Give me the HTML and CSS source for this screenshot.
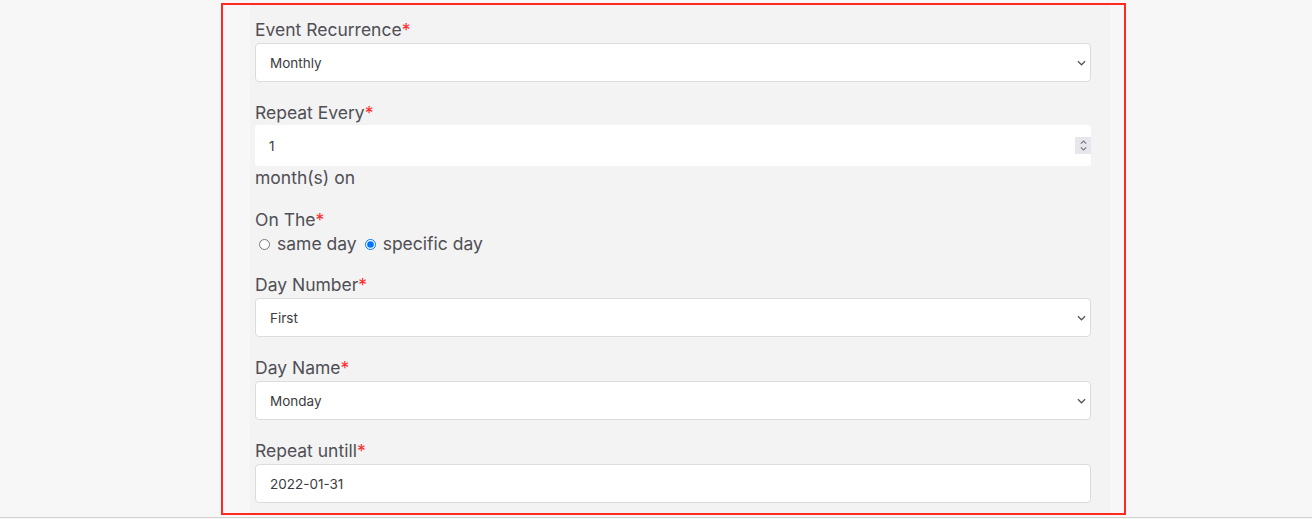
FILE: index.html
```html
<!DOCTYPE html>
<html lang="en">
<head>
<meta charset="utf-8">
<title>Event Recurrence</title>
<link rel="stylesheet" href="styles.css">
</head>
<body>
<div class="page">
  <div class="frame">
    <form class="panel">
      <div class="group">
        <label class="label">Event Recurrence<span class="req">*</span></label>
        <div class="select-wrap">
          <select class="control select"><option>Monthly</option></select>
          <svg class="chev" viewBox="0 0 10 6" width="9" height="6"><path d="M1 1l4 4 4-4" fill="none" stroke="#555" stroke-width="1.4"/></svg>
        </div>
      </div>
      <div class="group group-text">
        <label class="label label-tight">Repeat Every<span class="req">*</span></label>
        <div class="number">
          <input class="num-input" type="text" value="1">
          <span class="spin"><svg viewBox="0 0 10 16" width="9" height="15"><path d="M2 6l3-3 3 3M2 10l3 3 3-3" fill="none" stroke="#7a7a86" stroke-width="1.3"/></svg></span>
        </div>
        <div class="text-line">month(s) on</div>
      </div>
      <div class="group group-radio">
        <label class="label label-tight">On The<span class="req">*</span></label>
        <div class="radios">
          <label class="radio"><input type="radio" name="on"> same day</label>
          <label class="radio"><input type="radio" name="on" checked> specific day</label>
        </div>
      </div>
      <div class="group">
        <label class="label">Day Number<span class="req">*</span></label>
        <div class="select-wrap">
          <select class="control select"><option>First</option></select>
          <svg class="chev" viewBox="0 0 10 6" width="9" height="6"><path d="M1 1l4 4 4-4" fill="none" stroke="#555" stroke-width="1.4"/></svg>
        </div>
      </div>
      <div class="group">
        <label class="label">Day Name<span class="req">*</span></label>
        <div class="select-wrap">
          <select class="control select"><option>Monday</option></select>
          <svg class="chev" viewBox="0 0 10 6" width="9" height="6"><path d="M1 1l4 4 4-4" fill="none" stroke="#555" stroke-width="1.4"/></svg>
        </div>
      </div>
      <div class="group">
        <label class="label">Repeat untill<span class="req">*</span></label>
        <input class="control" type="text" value="2022-01-31">
      </div>
    </form>
  </div>
  <div class="bottom-line"></div>
</div>
</body>
</html>
```

FILE: styles.css
```css
html, body {
  margin: 0;
  padding: 0;
  background: #f7f7f7;
  font-family: Inter, "Open Sans", sans-serif;
}
.page {
  width: 1312px;
  height: 519px;
  overflow: hidden;
  padding-top: 3px;
  box-sizing: border-box;
}
.frame {
  margin-left: 221px;
  width: 905px;
  height: 512px;
  box-sizing: border-box;
  border: 2px solid #ff2a1f;
  background: #f7f7f7;
  overflow: hidden;
}
.panel {
  margin: 0 0 0 27px;
  width: 860px;
  height: 100%;
  box-sizing: border-box;
  background: #f3f3f3;
  padding: 13px 19px 0 5px;
}
.group {
  margin-bottom: 19px;
}
.group-text {
  margin-bottom: 18px;
}
.group-radio {
  margin-bottom: 17px;
}
.label {
  display: block;
  font-size: 17.5px;
  line-height: 24px;
  color: #4f4f55;
  margin-bottom: 1px;
}
.label-tight {
  margin-bottom: 0;
}
.req {
  color: #ff2a2a;
}
.control {
  display: block;
  width: 100%;
  height: 39px;
  box-sizing: border-box;
  border: 1px solid #dcdcdc;
  border-radius: 4px;
  background: #fff;
  padding: 0 14px;
  font-family: inherit;
  font-size: 13.5px;
  color: #3c3c40;
  outline: none;
}
.select-wrap {
  position: relative;
}
.select {
  appearance: none;
  -webkit-appearance: none;
}
.chev {
  position: absolute;
  right: 5px;
  top: 17px;
  pointer-events: none;
}
.number {
  display: flex;
  align-items: center;
  height: 41px;
  background: #fff;
  border-radius: 3px;
}
.num-input {
  flex: 1;
  border: none;
  outline: none;
  background: transparent;
  font-family: inherit;
  font-size: 13.5px;
  color: #3c3c40;
  padding: 0 14px;
  height: 100%;
}
.spin {
  width: 16px;
  height: 17px;
  background: #e6e6ec;
  display: flex;
  align-items: center;
  justify-content: center;
}
.text-line {
  font-size: 17.5px;
  line-height: 24px;
  color: #4f4f55;
}
.radios {
  display: flex;
  height: 24px;
  gap: 4px;
  font-size: 17.5px;
  line-height: 24px;
  color: #4f4f55;
}
.radio {
  display: flex;
  align-items: center;
  gap: 7px;
}
.radio input {
  width: 11px;
  height: 11px;
  margin: 0 0 0 4px;
}
.bottom-line {
  margin-top: 2px;
  height: 1px;
  background: #d2d2d2;
}
```
